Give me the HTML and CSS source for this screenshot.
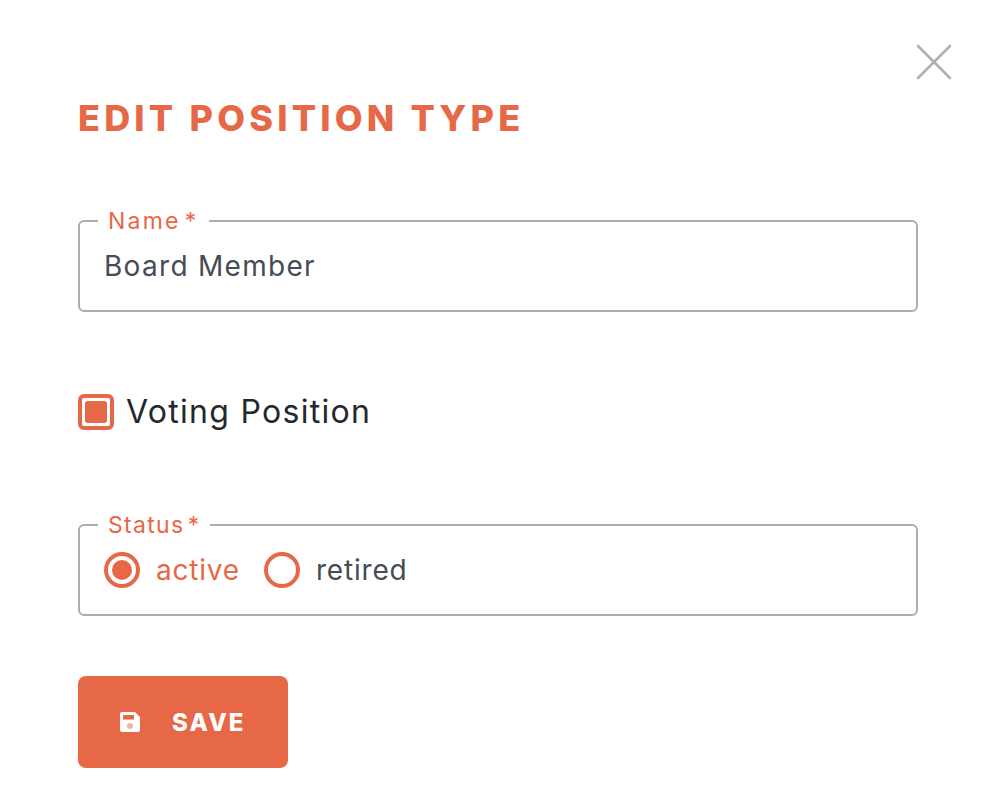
FILE: index.html
```html
<!DOCTYPE html>
<html lang="en">
<head>
    <meta charset="UTF-8">
    <meta name="viewport" content="width=device-width, initial-scale=1.0">
    <title>Edit Position Type</title>
    <link rel="stylesheet" href="styles.css">
</head>
<body>
    <div class="modal">
        <div class="close-row">
            <button class="close" type="button" aria-label="Close">
                <svg width="36" height="36" viewBox="0 0 36 36"><path d="M2 2L34 34M34 2L2 34"/></svg>
            </button>
        </div>
        <h1>Edit Position Type</h1>

        <fieldset class="field name-field">
            <legend>Name *</legend>
            <div class="value">Board Member</div>
        </fieldset>

        <label class="check">
            <span class="check-box"><span class="check-fill"></span></span>
            <span>Voting Position</span>
        </label>

        <fieldset class="field status-field">
            <legend>Status *</legend>
            <div class="radios">
                <label class="radio selected"><span class="radio-mark"><span class="radio-dot"></span></span>active</label>
                <label class="radio"><span class="radio-mark"></span>retired</label>
            </div>
        </fieldset>

        <button class="save" type="button">
            <svg width="22" height="22" viewBox="0 0 22 22">
                <path fill="#fff" fill-rule="evenodd" d="M3 1h13l5 5v13a2 2 0 0 1-2 2H3a2 2 0 0 1-2-2V3a2 2 0 0 1 2-2zm1 3v4.500h11V4z"/>
                <circle cx="11" cy="15" r="3" fill="#f2b3a1"/>
            </svg>
            <span>Save</span>
        </button>
    </div>
</body>
</html>
```

FILE: styles.css
```css
body {
    font-family: Inter, "Open Sans", sans-serif;
    background-color: #fff;
    margin: 0;
}
.modal {
    padding: 44px 76px 0 78px;
}
.close-row {
    display: flex;
    justify-content: flex-end;
    height: 36px;
    margin-right: -34px;
}
.close {
    border: 0;
    background: none;
    padding: 0;
    width: 36px;
    height: 36px;
}
.close svg {
    display: block;
}
.close path {
    stroke: #adb1ac;
    stroke-width: 2.6;
    stroke-linecap: round;
    fill: none;
}
h1 {
    margin: 18px 0 0;
    font-size: 36px;
    line-height: 40px;
    font-weight: 800;
    letter-spacing: 4.2px;
    text-transform: uppercase;
    color: #e76847;
}
.field {
    border: 2px solid #a9afad;
    border-radius: 6px;
    margin: 0;
    padding: 0 24px;
    min-width: 0;
}
.field legend {
    margin-left: -6px;
    padding: 0 10px;
    font-size: 23px;
    line-height: 28px;
    color: #e76847;
    word-spacing: -4.5px;
}
.name-field {
    margin-top: 69px;
    height: 105px;
    box-sizing: border-box;
}
.name-field legend {
    letter-spacing: 2.2px;
}
.value {
    font-size: 28px;
    line-height: 36px;
    letter-spacing: 1.3px;
    color: #454c55;
    margin-top: 13px;
}
.check {
    display: flex;
    align-items: center;
    gap: 12px;
    margin-top: 82px;
    font-size: 32px;
    line-height: 36px;
    letter-spacing: 1.3px;
    color: #24282d;
}
.check-box {
    box-sizing: border-box;
    width: 36px;
    height: 36px;
    border: 4px solid #e76847;
    border-radius: 6px;
    padding: 3px;
}
.check-fill {
    display: block;
    height: 100%;
    background-color: #e76847;
    border-radius: 3px;
}
.status-field {
    margin-top: 81px;
    height: 105px;
    box-sizing: border-box;
}
.status-field legend {
    letter-spacing: 1.3px;
}
.radios {
    display: flex;
    gap: 24px;
    margin-top: 13px;
}
.radio {
    display: flex;
    align-items: center;
    gap: 16px;
    font-size: 28px;
    line-height: 36px;
    letter-spacing: 0.8px;
    color: #454c55;
}
.radio.selected {
    color: #e76847;
}
.radio-mark {
    box-sizing: border-box;
    width: 36px;
    height: 36px;
    border: 4px solid #e76847;
    border-radius: 50%;
    padding: 4px;
}
.radio-dot {
    display: block;
    height: 100%;
    border-radius: 50%;
    background-color: #e76847;
}
.save {
    display: flex;
    align-items: center;
    gap: 31px;
    margin-top: 60px;
    width: 210px;
    height: 92px;
    padding: 0 0 0 41px;
    border: 0;
    border-radius: 8px;
    background-color: #e76847;
    color: #fff;
    font-family: inherit;
    font-size: 24px;
    font-weight: 800;
    letter-spacing: 2.2px;
    text-transform: uppercase;
}
```
